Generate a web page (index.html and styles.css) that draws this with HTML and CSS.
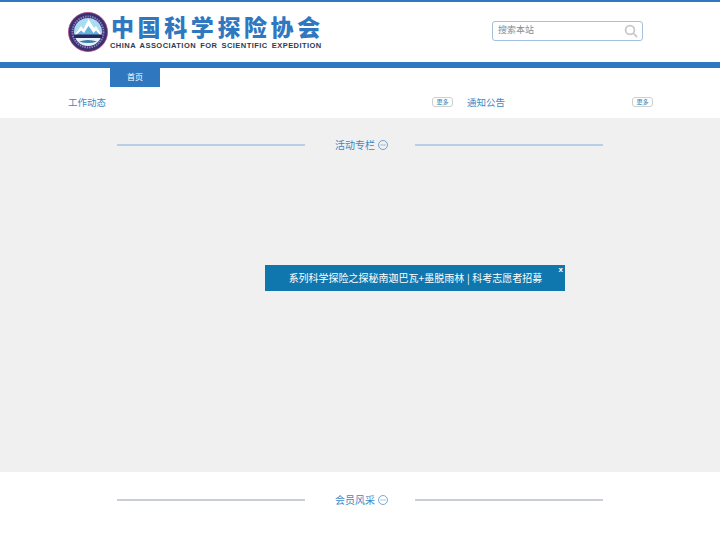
FILE: index.html
```html
<!DOCTYPE html>
<html lang="zh">
<head>
<meta charset="utf-8">
<title>中国科学探险协会</title>
<link rel="stylesheet" href="styles.css">
</head>
<body>
<header class="header">
  <div class="logo">
    <svg class="emblem" width="40" height="40" viewBox="0 0 40 40">
      <circle cx="20" cy="20" r="19.5" fill="#3a2f72"/>
      <circle cx="20" cy="20" r="19.5" fill="none" stroke="#a8457a" stroke-width="0.8"/>
      <circle cx="20" cy="20" r="15.5" fill="none" stroke="#8d84b8" stroke-width="2" stroke-dasharray="1.4 1"/>
      <circle cx="20" cy="20" r="14" fill="#a9dcf2"/>
      <path d="M6.5 23 L13 14 L15.5 17 L20.5 7 L26 16 L28 14 L33.5 23 Z" fill="#fff"/>
      <path d="M8 23 L13 18.5 L16 21 L20.5 14 L25.5 21 L28 18.5 L32 23 Z" fill="#62b3de"/>
      <rect x="6" y="22.5" width="28" height="3.6" fill="#2c2560"/>
      <path d="M7.5 26 H32.5 A14 14 0 0 1 7.5 26 Z" fill="#e4f3fa"/>
      <path d="M11 29.5 Q20 26.5 29 29.5 Q20 32.5 11 29.5 Z" fill="#3d7ba8"/>
    </svg>
    <div class="wordmark">
      <div class="cn">中国科学探险协会</div>
      <div class="en">CHINA ASSOCIATION FOR SCIENTIFIC EXPEDITION</div>
    </div>
  </div>
  <div class="search">
    <span class="search-text">搜索本站</span>
    <svg width="14" height="14" viewBox="0 0 14 14" fill="none" stroke="#c9c9c9" stroke-width="1.8">
      <circle cx="6" cy="6" r="4.4"/>
      <path d="M9.4 9.4 L13 13"/>
    </svg>
  </div>
</header>
<nav class="nav">
  <a class="nav-item">首页</a>
</nav>
<div class="news">
  <div class="news-col news-left">
    <span class="news-title">工作动态</span>
    <span class="more">更多</span>
  </div>
  <div class="news-col news-right">
    <span class="news-title">通知公告</span>
    <span class="more">更多</span>
  </div>
</div>
<main class="band">
  <div class="heading">
    <span class="rule"></span>
    <span class="heading-label">活动专栏<svg class="dots" width="10" height="10" viewBox="0 0 10 10"><circle cx="5" cy="5" r="4.5" fill="none" stroke="#5b8fc4" stroke-width="0.8"/><path d="M2.6 5h1M4.5 5h1M6.4 5h1" stroke="#5b8fc4" stroke-width="1"/></svg></span>
    <span class="rule"></span>
  </div>
  <div class="notice">
    <span>系列科学探险之探秘南迦巴瓦+墨脱雨林 | 科考志愿者招募</span>
    <span class="close">x</span>
  </div>
</main>
<section class="members">
  <div class="heading">
    <span class="rule rule-grey"></span>
    <span class="heading-label">会员风采<svg class="dots" width="10" height="10" viewBox="0 0 10 10"><circle cx="5" cy="5" r="4.5" fill="none" stroke="#5b8fc4" stroke-width="0.8"/><path d="M2.6 5h1M4.5 5h1M6.4 5h1" stroke="#5b8fc4" stroke-width="1"/></svg></span>
    <span class="rule rule-grey"></span>
  </div>
</section>
</body>
</html>
```
FILE: styles.css
```css
* { box-sizing: border-box; }
html, body { margin: 0; padding: 0; }
body {
  width: 720px;
  height: 540px;
  overflow: hidden;
  background: #fff;
  font-family: "Noto Sans CJK SC", "Noto Sans", sans-serif;
  color: #3a7cc0;
}
.header {
  height: 62px;
  border-top: 2px solid #2f78bf;
  padding: 10px 77px 0 68px;
  display: flex;
  justify-content: space-between;
  align-items: flex-start;
}
.logo { display: flex; align-items: center; gap: 2px; }
.emblem { flex: none; }
.wordmark { display: flex; flex-direction: column; }
.cn {
  font-size: 23px;
  line-height: 27px;
  height: 27px;
  font-weight: 900;
  letter-spacing: 3.6px;
  color: #2f78bf;
  padding-left: 1px;
  white-space: nowrap;
}
.en {
  font-family: "Liberation Sans", sans-serif;
  font-size: 7.5px;
  line-height: 11px;
  font-weight: 700;
  letter-spacing: 0.45px;
  word-spacing: 1.6px;
  color: #2a3a55;
  white-space: nowrap;
}
.search {
  margin-top: 9px;
  width: 151px;
  height: 20px;
  border: 1px solid #a5bfe0;
  border-radius: 3px;
  padding: 0 4px 0 5px;
  display: flex;
  align-items: center;
  justify-content: space-between;
}
.search-text { font-size: 9px; line-height: 16px; margin-top: -2px; color: #8b8b8b; }
.nav {
  height: 25px;
  border-top: 6px solid #2f78bf;
  padding-left: 110px;
}
.nav-item {
  display: block;
  width: 50px;
  height: 19px;
  background: #2f78bf;
  color: #fff;
  font-size: 8px;
  line-height: 18px;
  text-align: center;
}
.news {
  height: 29px;
  margin-bottom: 2px;
  padding: 0 67px 0 68px;
  display: flex;
  align-items: center;
}
.news-col {
  display: flex;
  justify-content: space-between;
  align-items: center;
}
.news-left { width: 385px; margin-right: 14px; }
.news-right { flex: 1; }
.news-title { font-size: 9.5px; line-height: 14px; color: #4287c6; }
.more {
  width: 21px;
  height: 10px;
  border: 1px solid #cfcfcf;
  border-radius: 3px;
  font-size: 6px;
  line-height: 8px;
  text-align: center;
  color: #3a86b8;
}
.band {
  position: relative;
  height: 354px;
  background: #f0f0f1;
  padding-top: 17px;
}
.heading {
  padding: 0 117px;
  height: 20px;
  display: flex;
  align-items: center;
}
.rule { width: 188px; height: 2px; background: #b9cfe7; flex: none; }
.rule-grey { background: #c9ced6; }
.heading-label {
  flex: 1;
  font-size: 10px;
  line-height: 20px;
  color: #4287c6;
  padding-left: 30px;
  white-space: nowrap;
  display: flex;
  align-items: center;
  gap: 3px;
}
.dots { flex: none; }
.notice {
  position: absolute;
  left: 265px;
  top: 147px;
  width: 300px;
  height: 26px;
  padding-left: 1px;
  background: #0f77ae;
  color: #fff;
  font-size: 10px;
  line-height: 26px;
  word-spacing: 0.5px;
  text-align: center;
}
.close {
  position: absolute;
  right: 2px;
  top: -8px;
  font-family: "Liberation Sans", sans-serif;
  font-size: 8px;
  font-weight: 700;
}
.members {
  padding-top: 18px;
  height: 68px;
}
```
